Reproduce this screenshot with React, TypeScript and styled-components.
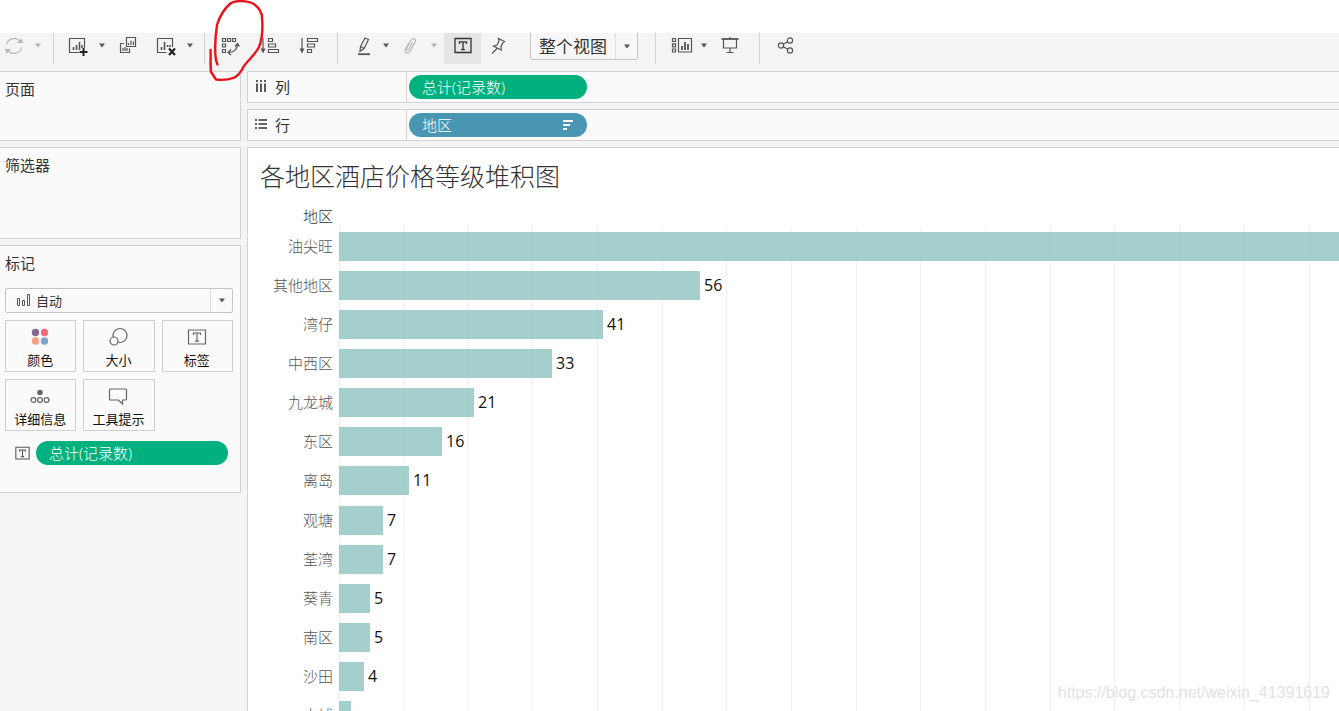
import React from "react";
import styled, { createGlobalStyle } from "styled-components";

const GlobalStyle = createGlobalStyle`
  *, *::before, *::after { box-sizing: border-box; }
  body {
    margin: 0;
    overflow: hidden;
    background: #f4f4f4;
    color: #333;
    font-family: "Open Sans", "Noto Sans CJK SC", sans-serif;
  }
  button, select { font: inherit; color: inherit; }
`;

const Page = styled.div`
  position: relative;
  display: flex;
  flex-direction: column;
  height: 100vh;
  overflow: hidden;
`;

const TopSpace = styled.div`
  flex: none;
  height: 33px;
  background: #fff;
`;

const Toolbar = styled.header`
  display: flex;
  flex: none;
  align-items: flex-start;
  height: 38px;
`;

const Group = styled.div<{ $left?: number; $right?: number; $gap?: number; $last?: boolean }>`
  display: flex;
  height: 31px;
  gap: ${(p) => p.$gap ?? 0}px;
  padding-left: ${(p) => p.$left ?? 0}px;
  padding-right: ${(p) => p.$right ?? 0}px;
  border-right: ${(p) => (p.$last ? "none" : "1px solid #d0d0d0")};
`;

const ToolButton = styled.button<{ $width?: number; $active?: boolean; $dim?: boolean; $space?: number }>`
  display: flex;
  align-items: center;
  justify-content: center;
  width: ${(p) => p.$width ?? 28}px;
  height: 31px;
  margin-left: ${(p) => p.$space ?? 0}px;
  padding: 0 0 6px;
  border: 0;
  background: ${(p) => (p.$active ? "#e5e5e5" : "transparent")};
  color: ${(p) => (p.$dim ? "#b5b5b5" : p.$active ? "#333" : "#555")};
`;

const SelectBox = styled.div`
  position: relative;
  color: #555;
`;

const Arrow = styled.span<{ $width: number }>`
  position: absolute;
  inset: 1px 1px 1px auto;
  display: flex;
  align-items: center;
  justify-content: center;
  width: ${(p) => p.$width}px;
  border-left: 1px solid #dcdcdc;
  pointer-events: none;
`;

const ViewSelectBox = styled(SelectBox)`
  width: 108px;
  height: 27px;
  margin-left: 15px;
`;

const ViewSelect = styled.select`
  display: block;
  width: 100%;
  height: 100%;
  padding: 0 24px 0 8px;
  border: 1px solid #c4c4c4;
  border-top: 0;
  border-radius: 0 0 2px 2px;
  background: #f7f7f7;
  color: #333;
  font-size: 17px;
  appearance: none;
`;

const Workspace = styled.div`
  display: flex;
  flex: 1;
  gap: 6px;
  min-height: 0;
`;

const Sidebar = styled.aside`
  display: flex;
  flex: none;
  flex-direction: column;
  gap: 6px;
  width: 241px;
`;

const Panel = styled.section<{ $height: number }>`
  min-height: ${(p) => p.$height}px;
  padding: 6px 7px 0 5px;
  border: 1px solid #d2d2d2;
  border-left: 0;
  background: #fafafa;
`;

const PanelTitle = styled.h2`
  margin: 0;
  font-size: 15px;
  font-weight: 400;
  line-height: 22px;
`;

const MarkSelectBox = styled(SelectBox)`
  height: 25px;
  margin: 14px 0 7px;
`;

const MarkSelect = styled.select`
  display: block;
  width: 100%;
  height: 100%;
  padding: 0 24px 0 30px;
  border: 1px solid #c4c4c4;
  border-radius: 2px;
  background: #fafafa;
  color: #333;
  font-size: 13px;
  appearance: none;
`;

const SelectIcon = styled.span`
  position: absolute;
  top: 5px;
  left: 11px;
  display: flex;
  pointer-events: none;
`;

const CardGrid = styled.div`
  display: grid;
  grid-template-columns: repeat(3, 1fr);
  gap: 7px;
`;

const Card = styled.button`
  display: flex;
  flex-direction: column;
  align-items: center;
  gap: 3px;
  height: 52px;
  padding: 6px 1px 0 0;
  border: 1px solid #d0d0d0;
  background: #fafafa;
  color: #666;
`;

const CardLabel = styled.span`
  color: #111;
  font-size: 13px;
  line-height: 20px;
  white-space: nowrap;
`;

const MarkField = styled.div`
  display: flex;
  align-items: center;
  gap: 6px;
  margin-top: 10px;
  padding: 0 5px 0 10px;
  color: #555;
`;

const Pill = styled.button<{ $color: string; $width?: number }>`
  display: flex;
  flex: ${(p) => (p.$width ? "none" : "1")};
  align-items: center;
  justify-content: space-between;
  width: ${(p) => (p.$width ? `${p.$width}px` : "auto")};
  height: 24px;
  padding: 0 13px;
  border: 0;
  border-radius: 12px;
  background: ${(p) => p.$color};
  color: #fff;
  font-size: 15px;
  font-weight: 300;
  line-height: 24px;
`;

const Main = styled.main`
  display: flex;
  flex: 1;
  flex-direction: column;
  gap: 6px;
  min-width: 0;
`;

const Shelf = styled.section`
  display: flex;
  flex: none;
  align-items: center;
  height: 32px;
  border: 1px solid #d2d2d2;
  border-right: 0;
  background: #fafafa;
`;

const ShelfName = styled.h2`
  display: flex;
  align-items: center;
  align-self: stretch;
  gap: 8px;
  width: 159px;
  margin: 0 2px 0 0;
  padding: 0 0 2px 7px;
  border-right: 1px solid #d2d2d2;
  font-size: 15px;
  font-weight: 400;
`;

const View = styled.section`
  flex: 1;
  min-height: 0;
  overflow: hidden;
  border: 1px solid #d2d2d2;
  border-width: 1px 0 0 1px;
  background: #fff;
`;

const ViewTitle = styled.h1`
  margin: 10px 0 11px 12px;
  font-size: 25px;
  font-weight: 300;
  line-height: 36px;
`;

const AxisName = styled.div`
  width: 91px;
  padding-right: 6px;
  font-size: 15px;
  font-weight: 300;
  line-height: 22px;
  text-align: right;
`;

const Chart = styled.div`
  position: relative;
  display: grid;
  grid-template-rows: repeat(13, 1fr);
  height: 508px;
`;

const GridLines = styled.svg`
  position: absolute;
  top: 0;
  left: 91px;
  width: calc(100% - 91px);
  height: 100%;
`;

const Row = styled.div`
  position: relative;
  display: flex;
  align-items: center;
`;

const RowLabel = styled.span`
  flex: none;
  width: 91px;
  padding: 0 6px 1px 0;
  color: #555;
  font-size: 15px;
  font-weight: 300;
  line-height: 22px;
  text-align: right;
`;

const Bar = styled.div`
  flex: none;
  height: 29px;
  background: rgba(143, 195, 192, 0.8);
`;

const Value = styled.span`
  margin-left: 4px;
  padding-bottom: 1px;
  color: #111;
  font-size: 16px;
  line-height: 22px;
`;

const Watermark = styled.div`
  position: absolute;
  right: 9px;
  bottom: 8px;
  color: #e2e2e2;
  font-family: "Liberation Sans", sans-serif;
  font-size: 16px;
  line-height: 20px;
`;

const Annotation = styled.svg`
  position: absolute;
  top: 0;
  left: 200px;
  pointer-events: none;
`;

const Svg = ({ w = 20, h = 20, children }: { w?: number; h?: number; children: React.ReactNode }) => (
  <svg width={w} height={h} viewBox={`0 0 ${w} ${h}`} fill="none" stroke="currentColor" strokeWidth="1.2" aria-hidden="true">
    {children}
  </svg>
);

const Caret = () => (
  <svg width="8" height="5" viewBox="0 0 8 5" aria-hidden="true">
    <path d="M1 0.5h6L4 4.5z" fill="currentColor" />
  </svg>
);

const RefreshIcon = () => (
  <Svg>
    <path d="M2.500 8.500a7.500 7.500 0 0 1 14.200-1.500M17.500 11.500a7.500 7.500 0 0 1-14.200 1.500" />
    <path d="M13 7h6l-1.500-4.500zM7 13H1l1.500 4.500z" fill="currentColor" stroke="none" />
  </Svg>
);

const NewSheetIcon = () => (
  <Svg w={22}>
    <path d="M12 16.500H2.500v-14h15V12" />
    <path d="M6.500 14v-3M9.500 14V9M12.500 14V6M15 12V9" strokeWidth="1.600" />
    <path d="M16.500 12v8M12.500 16h8" stroke="#222" strokeWidth="2" />
  </Svg>
);

const DuplicateIcon = () => (
  <Svg>
    <path d="M8.500 1.500h9v9h-9zM6 7.500H2.500v9h9v-4" />
    <path d="M10.500 9V7M13 9V4.500M15.500 9V5.500M5 15v-3M7 15v-4M9 15v-3" />
  </Svg>
);

const ClearIcon = () => (
  <Svg w={22}>
    <path d="M11.500 16.500H2.500v-14h15V11" />
    <path d="M6.500 14v-3M9.500 14V6M12.500 11V9M15 11V9" strokeWidth="1.600" />
    <path d="M14 12.500l6 6.500M20 12.500l-6 6.500" stroke="#222" strokeWidth="2.200" />
  </Svg>
);

const SwapIcon = () => (
  <Svg>
    <path d="M1.500 2.500h3v3h-3zM6.500 2.500h3v3h-3zM11.500 2.500h3v3h-3zM1.500 8h3v3h-3zM1.500 13.500h3v3h-3z" />
    <path d="M16.500 8c0 5-3.500 8.500-9 8.500M14 10.500L16.500 7.500l2 3M10 13.500l-3 3 3 2.500" />
  </Svg>
);

const SortAscIcon = () => (
  <Svg>
    <path d="M3 2v13M8.500 2.500h4v3h-4zM8.500 8h7v3h-7zM8.500 13.500h10v3h-10z" />
    <path d="M0.500 12.500h5L3 17.500z" fill="currentColor" stroke="none" />
  </Svg>
);

const SortDescIcon = () => (
  <Svg>
    <path d="M3 2v13M8.500 2.500h10v3h-10zM8.500 8h7v3h-7zM8.500 13.500h4v3h-4z" />
    <path d="M0.500 12.500h5L3 17.500z" fill="currentColor" stroke="none" />
  </Svg>
);

const PenIcon = () => (
  <Svg>
    <path d="M6.500 10.500L11 2l3.500 1.500L10 12.500 6 15.500zM6.500 10.500L10 12.500" />
    <path d="M4 18.200h12" strokeWidth="1.800" />
  </Svg>
);

const ClipIcon = () => (
  <Svg>
    <path d="M12.500 6.500l-3.500 6.500c-1 1.500-3 .5-2.200-1.200l4.500-8c1.800-2.500 5-.8 3.800 1.900l-5 9.600c-2 3.300-6.200 1.300-4.600-2l3.500-6.500" />
  </Svg>
);

const TextIcon = ({ size = 18 }: { size?: number }) => (
  <svg width={size} height={size} viewBox="0 0 18 18" fill="none" stroke="currentColor" strokeWidth="1.300" aria-hidden="true">
    <path d="M1 1.500h16v14H1z" />
    <path d="M5.500 7V4.800h7V7M9 4.800v8M7 12.700h4" />
  </svg>
);

const PinIcon = () => (
  <Svg>
    <path d="M10.500 2.500l6 3-1.500 1-2 4 .2 3.500-7.700-3.800 3.500-1.200 2-4zM9 12.500l-5 5" />
  </Svg>
);

const CardsIcon = () => (
  <Svg w={22}>
    <path d="M1.500 2.500h3v3h-3zM1.500 7.800h3v3h-3zM1.500 13h3v3h-3zM7.500 2.500h13v13.500h-13z" />
    <path d="M11 14v-4M14 14V6M17 14V8" strokeWidth="1.800" />
  </Svg>
);

const PresentIcon = () => (
  <Svg>
    <path d="M1.500 3h17" strokeWidth="1.800" />
    <path d="M3.500 3v9h13V3M10 12v4.500M6.500 16.500h7M10 1v2" />
  </Svg>
);

const ShareIcon = () => (
  <Svg>
    <circle cx="5" cy="9.500" r="2.600" />
    <circle cx="14" cy="4.500" r="2.600" />
    <circle cx="14" cy="14.500" r="2.600" />
    <path d="M7.200 8.300l4.600-2.600M7.200 10.700l4.600 2.600" />
  </Svg>
);

const districts = [
  { name: "油尖旺", count: 170 },
  { name: "其他地区", count: 56 },
  { name: "湾仔", count: 41 },
  { name: "中西区", count: 33 },
  { name: "九龙城", count: 21 },
  { name: "东区", count: 16 },
  { name: "离岛", count: 11 },
  { name: "观塘", count: 7 },
  { name: "荃湾", count: 7 },
  { name: "葵青", count: 5 },
  { name: "南区", count: 5 },
  { name: "沙田", count: 4 },
  { name: "大埔", count: 2 },
];

// Distance from the axis to a number of records, on a whole pixel.
const scale = (count: number) => Math.max(0, Math.floor(count * 6.47 - 0.5));
const ticks = Array.from({ length: 40 }, (_, i) => scale(i * 10));

export default function App() {
  return (
    <Page>
      <GlobalStyle />
      <TopSpace />
      <Toolbar>
        <Group $right={5}>
          <ToolButton $dim aria-label="刷新"><RefreshIcon /></ToolButton>
          <ToolButton $dim $width={20} aria-label="刷新选项"><Caret /></ToolButton>
        </Group>
        <Group $left={10} $right={4}>
          <ToolButton aria-label="新建工作表"><NewSheetIcon /></ToolButton>
          <ToolButton $width={20} aria-label="新建选项"><Caret /></ToolButton>
          <ToolButton $width={32} aria-label="复制"><DuplicateIcon /></ToolButton>
          <ToolButton $space={8} aria-label="清除"><ClearIcon /></ToolButton>
          <ToolButton $width={20} aria-label="清除选项"><Caret /></ToolButton>
        </Group>
        <Group $left={10} $right={12} $gap={7}>
          <ToolButton $width={32} aria-label="交换行和列"><SwapIcon /></ToolButton>
          <ToolButton $width={32} aria-label="升序"><SortAscIcon /></ToolButton>
          <ToolButton $width={32} aria-label="降序"><SortDescIcon /></ToolButton>
        </Group>
        <Group $left={12} $right={17}>
          <ToolButton aria-label="突出显示"><PenIcon /></ToolButton>
          <ToolButton $width={16} aria-label="突出显示选项"><Caret /></ToolButton>
          <ToolButton $dim $space={2} aria-label="分组"><ClipIcon /></ToolButton>
          <ToolButton $dim $width={20} aria-label="分组选项"><Caret /></ToolButton>
          <ToolButton $active $width={37} aria-label="显示标签"><TextIcon /></ToolButton>
          <ToolButton $width={34} aria-label="固定"><PinIcon /></ToolButton>
          <ViewSelectBox>
            <ViewSelect aria-label="视图大小"><option>整个视图</option></ViewSelect>
            <Arrow $width={22}><Caret /></Arrow>
          </ViewSelectBox>
        </Group>
        <Group $left={12} $right={15}>
          <ToolButton aria-label="显示卡"><CardsIcon /></ToolButton>
          <ToolButton $width={16} aria-label="显示卡选项"><Caret /></ToolButton>
          <ToolButton $space={4} aria-label="演示模式"><PresentIcon /></ToolButton>
        </Group>
        <Group $left={12} $last>
          <ToolButton aria-label="共享"><ShareIcon /></ToolButton>
        </Group>
      </Toolbar>

      <Workspace>
        <Sidebar>
          <Panel $height={70}><PanelTitle>页面</PanelTitle></Panel>
          <Panel $height={92}><PanelTitle>筛选器</PanelTitle></Panel>
          <Panel $height={248}>
            <PanelTitle>标记</PanelTitle>
            <MarkSelectBox>
              <MarkSelect aria-label="标记类型"><option>自动</option></MarkSelect>
              <SelectIcon>
                <Svg w={14} h={14}><path d="M1.500 5.500h2v7h-2zM6.500 7.500h2v5h-2zM11.500 1.500h2v11h-2z" strokeWidth="1" /></Svg>
              </SelectIcon>
              <Arrow $width={22}><Caret /></Arrow>
            </MarkSelectBox>
            <CardGrid>
              <Card>
                <Svg>
                  <g stroke="none">
                    <circle cx="5.500" cy="5.500" r="3.700" fill="#84658e" />
                    <circle cx="14.500" cy="5.500" r="3.700" fill="#f2697f" />
                    <circle cx="5.500" cy="14" r="3.700" fill="#f4a184" />
                    <circle cx="14.500" cy="14" r="3.700" fill="#7ba3c9" />
                  </g>
                </Svg>
                <CardLabel>颜色</CardLabel>
              </Card>
              <Card>
                <Svg>
                  <circle cx="12" cy="8.500" r="7" />
                  <circle cx="6" cy="14" r="4" fill="#fafafa" />
                </Svg>
                <CardLabel>大小</CardLabel>
              </Card>
              <Card>
                <Svg><path d="M1.500 3h17v14h-17zM6.500 8V6h7v2M10 6v8.200M8 14.200h4" /></Svg>
                <CardLabel>标签</CardLabel>
              </Card>
              <Card>
                <Svg>
                  <circle cx="10" cy="6.500" r="2.800" fill="currentColor" stroke="none" />
                  <circle cx="3.500" cy="14" r="2.400" />
                  <circle cx="10" cy="14" r="2.400" />
                  <circle cx="16.500" cy="14" r="2.400" />
                </Svg>
                <CardLabel>详细信息</CardLabel>
              </Card>
              <Card>
                <Svg><path d="M2.500 3h15q1 0 1 1v9q0 1-1 1H14.500v4l-4-4H2.500q-1 0-1-1V4q0-1 1-1z" /></Svg>
                <CardLabel>工具提示</CardLabel>
              </Card>
            </CardGrid>
            <MarkField>
              <TextIcon size={15} />
              <Pill $color="#00b180">总计(记录数)</Pill>
            </MarkField>
          </Panel>
        </Sidebar>

        <Main>
          <Shelf>
            <ShelfName>
              <Svg w={12} h={14}><path d="M2 1v2M6 1v2M10 1v2M2 4.500v8.500M6 4.500v8.500M10 4.500v8.500" strokeWidth="1.600" /></Svg>
              列
            </ShelfName>
            <Pill $color="#00b180" $width={178}>总计(记录数)</Pill>
          </Shelf>
          <Shelf>
            <ShelfName>
              <Svg w={12} h={14}><path d="M0 3h2M0 7h2M0 11h2M3.500 3H12M3.500 7H12M3.500 11H12" strokeWidth="1.500" /></Svg>
              行
            </ShelfName>
            <Pill $color="#4996b2" $width={178}>
              地区
              <Svg w={12} h={12}><path d="M1 2h10M1 6h7M1 10h4" strokeWidth="2" /></Svg>
            </Pill>
          </Shelf>
          <View>
            <ViewTitle>各地区酒店价格等级堆积图</ViewTitle>
            <AxisName>地区</AxisName>
            <Chart>
              <GridLines aria-hidden="true">
                {ticks.map((x) => (
                  <line key={x} x1={x + 0.5} x2={x + 0.5} y1="0" y2="100%" stroke="#efefef" />
                ))}
              </GridLines>
              {districts.map((d) => (
                <Row key={d.name}>
                  <RowLabel>{d.name}</RowLabel>
                  <Bar style={{ width: scale(d.count) }} />
                  {d.count > 2 && d.count < 100 && <Value>{d.count}</Value>}
                </Row>
              ))}
            </Chart>
          </View>
        </Main>
      </Workspace>

      <Watermark>https://blog.csdn.net/weixin_41391619</Watermark>
      <Annotation width="80" height="90" viewBox="0 0 80 90" fill="none" stroke="#ea1218" strokeWidth="2.4" strokeLinecap="round" strokeLinejoin="round" aria-hidden="true">
        <path d="M17.500 64.500C14 58 15 38 17 25C20 15 25 8 31 3C36 0 47 1 52 3C59 7 62 12 62 18C63 28 62 39 59 47C55 55 48 60 44 66C41 72 37 77 33 78C28 80 20 80 16 79.500L11 72C10 65 11 57 10.500 50" />
      </Annotation>
    </Page>
  );
}
